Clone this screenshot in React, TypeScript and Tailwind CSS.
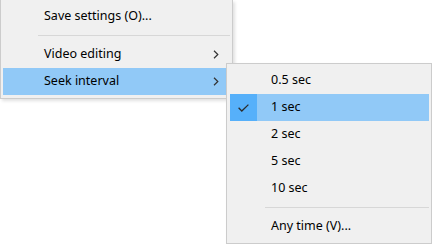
import React from 'react';

function Chevron() {
  return (
    <svg width="6" height="9" viewBox="0 0 6 9" fill="none" stroke="#333" strokeWidth="1.2">
      <path d="M1 0.8 L4.8 4.5 L1 8.2" />
    </svg>
  );
}

function Check() {
  return (
    <svg width="11" height="8" viewBox="0 0 11 8" fill="none" stroke="#2b2b2b" strokeWidth="1.3">
      <path d="M0.6 3.8 L3.8 7 L10.4 0.6" />
    </svg>
  );
}

function Item({ label, arrow, active, checked }: { label: string; arrow?: boolean; active?: boolean; checked?: boolean }) {
  return (
    <div className={`flex items-center h-[27px] ${active ? 'bg-[#91c9f7]' : ''}`}>
      <div className={`w-[27px] h-[27px] flex items-center justify-center ${checked ? 'bg-[#56b0fa]' : ''}`}>
        {checked && <Check />}
      </div>
      <span className="ml-[14px] flex-1 text-[12.5px] text-black leading-none">{label}</span>
      {arrow && (
        <span className="mr-[11px] flex items-center">
          <Chevron />
        </span>
      )}
    </div>
  );
}

function Separator() {
  return <div className="ml-[35px] my-[5px] h-px bg-[#d7d7d7]" />;
}

export default function App() {
  return (
    <div className="relative w-[432px] h-[244px] bg-white overflow-hidden font-['Segoe_UI','Noto_Sans',sans-serif]">
      {/* main menu */}
      <div className="w-[233px] bg-[#f0f0f0] border-x border-b border-[#cccccc] px-[2px] pt-[3px] pb-[3px] shadow-[2px_2px_3px_rgba(0,0,0,0.12)]">
        <Item label="Save settings (O)..." />
        <Separator />
        <Item label="Video editing" arrow />
        <Item label="Seek interval" arrow active />
      </div>

      {/* submenu */}
      <div className="absolute left-[226px] top-[63px] w-[206px] bg-[#f0f0f0] border border-[#cccccc] p-[3px] pr-[2px] shadow-[2px_2px_3px_rgba(0,0,0,0.12)]">
        <Item label="0.5 sec" />
        <Item label="1 sec" active checked />
        <Item label="2 sec" />
        <Item label="5 sec" />
        <Item label="10 sec" />
        <Separator />
        <Item label="Any time (V)..." />
      </div>
    </div>
  );
}
